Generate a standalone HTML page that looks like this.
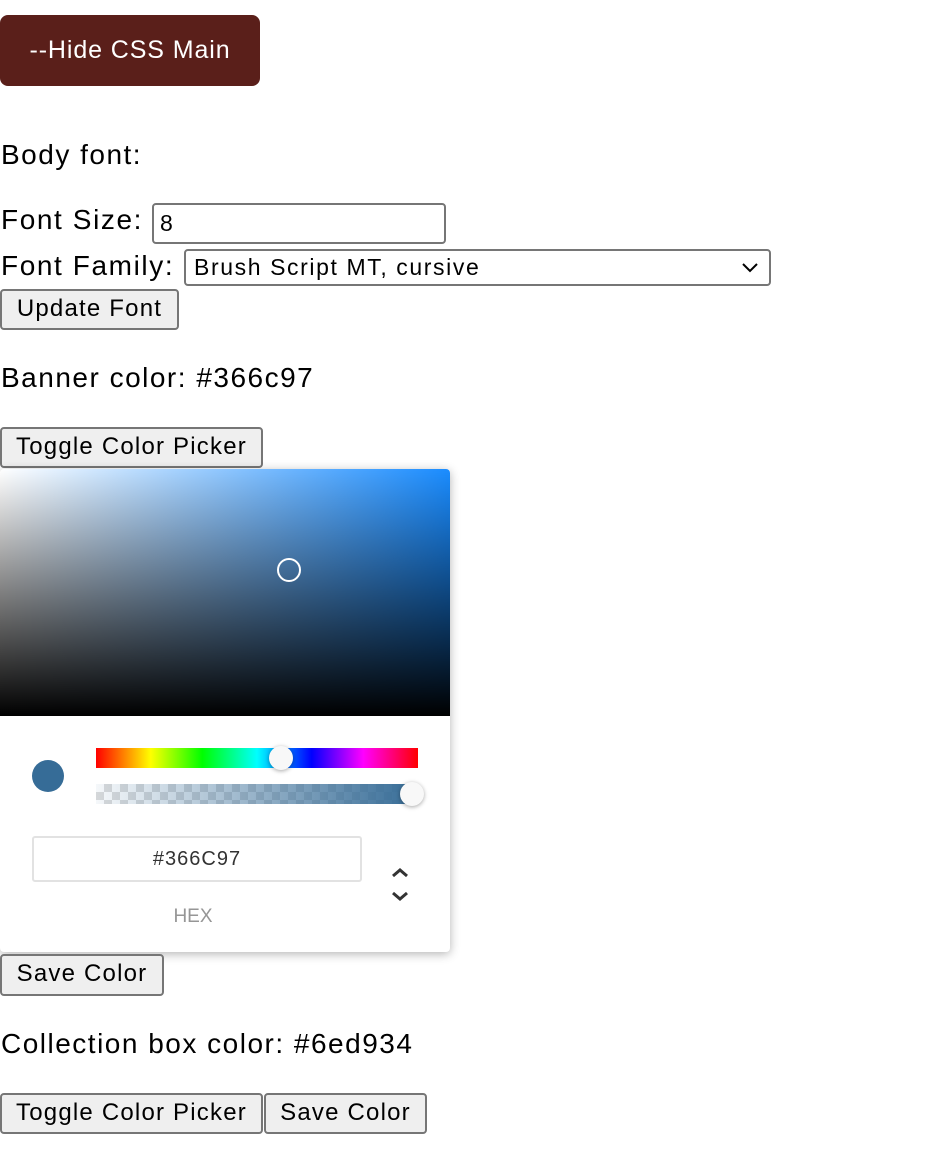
<!DOCTYPE html>
<html><head><meta charset="utf-8"><style>
*{box-sizing:border-box;margin:0;padding:0}
body{width:932px;height:1159px;background:#fff;font-family:"Liberation Sans",Arial,sans-serif;color:#000;position:relative;overflow:hidden}
.a{position:absolute}
.t{font-size:28px;letter-spacing:1.5px;white-space:nowrap;line-height:30px}
.btn{position:absolute;background:#efefef;border:2px solid #767676;border-radius:4px;font-size:24px;letter-spacing:1.2px;line-height:36px;text-align:center;white-space:nowrap}
</style></head><body>
<div class="a" style="left:0;top:15px;width:260px;height:71px;background:#5a1f1a;border-radius:8px;color:#fff;font-size:25px;letter-spacing:0.9px;line-height:71px;text-align:center">--Hide CSS Main</div>
<div class="a t" style="left:1px;top:140px">Body font:</div>
<div class="a t" style="left:1px;top:205px;letter-spacing:1.6px">Font Size:</div>
<div class="a" style="left:152px;top:203px;width:294px;height:41px;border:2px solid #767676;border-radius:4px;font-size:23px;line-height:37px;padding-left:6px">8</div>
<div class="a t" style="left:1px;top:251px;letter-spacing:1.6px">Font Family:</div>
<div class="a" style="left:184px;top:249px;width:587px;height:37px;border:2px solid #767676;border-radius:4px;font-size:23px;letter-spacing:1.6px;line-height:33px;padding-left:8px">Brush Script MT, cursive
<svg class="a" style="right:10px;top:11px" width="18" height="12" viewBox="0 0 18 12"><path d="M2 2l7 7 7-7" fill="none" stroke="#000" stroke-width="2"/></svg></div>
<div class="btn" style="left:0;top:289px;width:179px;height:41px">Update Font</div>
<div class="a t" style="left:1px;top:363px">Banner color: #366c97</div>
<div class="btn" style="left:0;top:427px;width:263px;height:41px">Toggle Color Picker</div>
<div class="a" style="left:0;top:469px;width:450px;height:483px;background:#fff;border-radius:4px;box-shadow:0 2px 10px rgba(0,0,0,.3);overflow:hidden">
 <div class="a" style="left:0;top:0;width:450px;height:247px;background:linear-gradient(to right,#fff,#1a8cff)"></div>
 <div class="a" style="left:0;top:0;width:450px;height:247px;background:linear-gradient(to bottom,rgba(0,0,0,0),#000)"></div>
 <div class="a" style="left:277px;top:89px;width:24px;height:24px;border:2px solid #fff;border-radius:50%"></div>
 <div class="a" style="left:32px;top:291px;width:32px;height:32px;border-radius:50%;background:#366c97"></div>
 <div class="a" style="left:96px;top:279px;width:322px;height:20px;background:linear-gradient(to right,#f00,#ff0 17%,#0f0 33%,#0ff 50%,#00f 67%,#f0f 83%,#f00)"></div>
 <div class="a" style="left:269px;top:277px;width:24px;height:24px;border-radius:50%;background:#f8f8f8;box-shadow:0 1px 4px rgba(0,0,0,.35)"></div>
 <div class="a" style="left:96px;top:315px;width:322px;height:20px;background:linear-gradient(to right,rgba(54,108,151,0.05),#366c97),repeating-conic-gradient(#ddd 0 25%,#fff 0 50%) 0 0/16px 16px"></div>
 <div class="a" style="left:400px;top:313px;width:24px;height:24px;border-radius:50%;background:#f8f8f8;box-shadow:0 1px 4px rgba(0,0,0,.35)"></div>
 <div class="a" style="left:32px;top:367px;width:330px;height:46px;border:2px solid #e2e2e2;border-radius:3px;text-align:center;font-size:20px;letter-spacing:1px;line-height:42px;color:#333">#366C97</div>
 <div class="a" style="left:150px;top:437px;width:86px;text-align:center;font-size:19px;color:#969696">HEX</div>
 <svg class="a" style="left:390px;top:397px" width="20" height="40" viewBox="0 0 20 40"><path d="M3 10l7-6 7 6M3 27l7 6 7-6" fill="none" stroke="#333" stroke-width="3"/></svg>
</div>
<div class="btn" style="left:0;top:954px;width:164px;height:42px">Save Color</div>
<div class="a t" style="left:1px;top:1029px">Collection box color: #6ed934</div>
<div class="btn" style="left:0;top:1093px;width:263px;height:41px">Toggle Color Picker</div>
<div class="btn" style="left:264px;top:1093px;width:163px;height:41px">Save Color</div>
</body></html>
